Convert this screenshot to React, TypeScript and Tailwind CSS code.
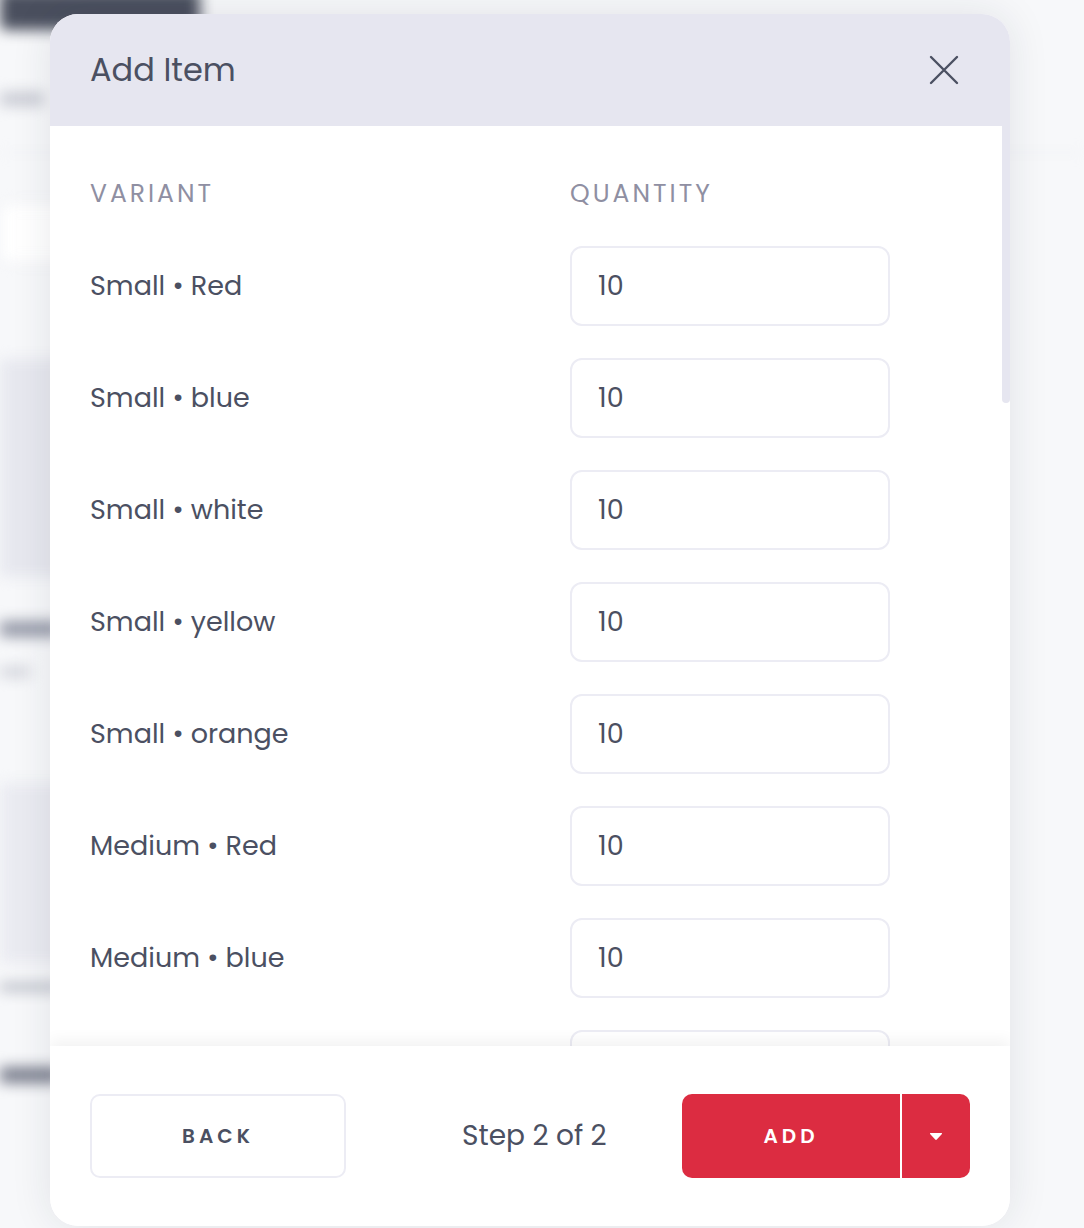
import React, { useState } from 'react';

const VARIANTS = [
  'Small • Red',
  'Small • blue',
  'Small • white',
  'Small • yellow',
  'Small • orange',
  'Medium • Red',
  'Medium • blue',
  'Medium • white',
  'Medium • yellow',
];

const font = { fontFamily: 'Poppins, Inter, "Noto Sans", sans-serif' };

// blurred page that sits behind the dialog
const Backdrop: React.FC = () => (
  <div className="min-h-[1228px] bg-[#f7f8fa] overflow-hidden">
    <div className="blur-[7px]">
      <div className="-mt-[10px] h-[40px] w-[200px] bg-[#4a4f5e] rounded-md" />
      <div className="mt-[62px] h-[14px] w-[44px] bg-[#c8cad3] rounded" />
      <div className="mt-[46px] h-[1px] bg-[#e8e9ee]" />
      <div className="mt-[50px] h-[60px] w-[120px] bg-white border border-[#e3e4ea] rounded-lg" />
      <div className="mt-[96px] h-[218px] w-[80px] bg-[#e7e8ef]" />
      <div className="mt-[44px] h-[16px] w-[60px] bg-[#9599a8]" />
      <div className="mt-[30px] h-[10px] w-[30px] bg-[#cfd1d9]" />
      <div className="mt-[106px] h-[180px] w-[80px] bg-[#eaebf1]" />
      <div className="mt-[20px] h-[8px] w-[60px] bg-[#b3b6c1]" />
      <div className="mt-[76px] h-[16px] w-[60px] bg-[#7a7e8d]" />
    </div>
  </div>
);

const CloseIcon: React.FC = () => (
  <svg width="32" height="32" viewBox="0 0 32 32" fill="none" stroke="#4b5062" strokeWidth="2.4" strokeLinecap="round">
    <path d="M3 3 L29 29 M29 3 L3 29" />
  </svg>
);

const Caret: React.FC = () => (
  <svg width="14" height="9" viewBox="0 0 14 9" fill="#ffffff">
    <path d="M1.5 1 H12.5 Q13.6 1 12.9 1.9 L7.8 7.6 Q7 8.4 6.2 7.6 L1.1 1.9 Q0.4 1 1.5 1 Z" />
  </svg>
);

export default function App() {
  const [qty, setQty] = useState<string[]>(VARIANTS.map(() => '10'));

  return (
    <div className="relative w-full min-h-[1228px]" style={font}>
      <Backdrop />
      <div className="absolute inset-0 pt-[14px] pl-[50px]">
        <div className="w-[960px] h-[1212px] bg-white rounded-[28px] overflow-hidden flex flex-col shadow-[0_0_40px_rgba(30,35,60,0.10)]">
          <div className="h-[112px] shrink-0 bg-[#e6e6f0] flex items-center justify-between pl-[40px] pr-[50px]">
            <h2 className="text-[32px] text-[#4b5062]">Add Item</h2>
            <button className="w-[32px] h-[32px] flex items-center justify-center">
              <CloseIcon />
            </button>
          </div>

          <div className="relative flex-1 overflow-hidden">
            <div className="absolute right-0 top-0 w-[8px] h-[277px] bg-[#e6e6f0] rounded-b-[4px]" />
            <div className="pl-[40px] pt-[51px]">
              <div className="grid grid-cols-[480px_320px] text-[25px] leading-[34px] tracking-[3px] text-[#8f8fa2]">
                <div>VARIANT</div>
                <div>QUANTITY</div>
              </div>
              <div className="mt-[35px] flex flex-col gap-[32px]">
                {VARIANTS.map((v, i) => (
                  <div key={v} className="grid grid-cols-[480px_320px] items-center">
                    <div className="text-[27px] text-[#4b5062]">{v}</div>
                    <input
                      value={qty[i]}
                      onChange={(e) => {
                        const next = [...qty];
                        next[i] = e.target.value;
                        setQty(next);
                      }}
                      className="h-[80px] w-[320px] border-2 border-[#ececf4] rounded-[12px] px-[26px] text-[27px] text-[#4b5062] outline-none bg-white"
                      style={font}
                    />
                  </div>
                ))}
              </div>
            </div>
          </div>

          <div className="h-[180px] shrink-0 bg-white flex items-center px-[40px] shadow-[0_-6px_14px_rgba(0,0,0,0.05)] relative">
            <button className="w-[256px] h-[84px] border-2 border-[#ececf4] rounded-[10px] text-[20px] font-semibold tracking-[4px] text-[#4b5062]">
              BACK
            </button>
            <span className="ml-[116px] text-[28px] text-[#4b5062]">Step 2 of 2</span>
            <div className="ml-auto flex h-[84px] rounded-[10px] overflow-hidden bg-[#dc2c41]">
              <button className="w-[218px] h-full text-[20px] font-semibold tracking-[4px] text-white">ADD</button>
              <div className="w-[2px] bg-white" />
              <button className="w-[68px] h-full flex items-center justify-center">
                <Caret />
              </button>
            </div>
          </div>
        </div>
      </div>
    </div>
  );
}
